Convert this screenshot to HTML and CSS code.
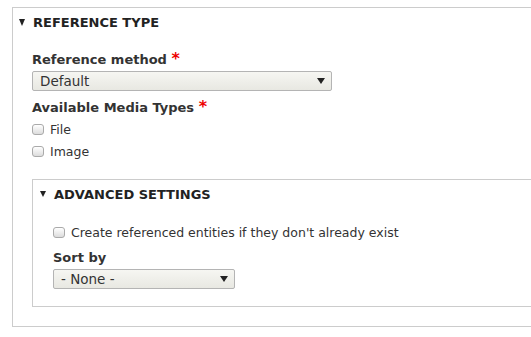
FILE: index.html
```html
<!DOCTYPE html>
<html lang="en">
<head>
    <meta charset="UTF-8">
    <title>Reference type</title>
    <link rel="stylesheet" href="styles.css">
</head>
<body>

<details class="panel outer" open>
    <summary class="panel-title">Reference type</summary>
    <div class="panel-body">
        <div class="form-item">
            <label class="form-label">Reference method <span class="req">*</span></label>
            <div class="select wide">
                <select>
                    <option>Default</option>
                </select>
                <span class="arrow"></span>
            </div>
        </div>

        <div class="form-item">
            <label class="form-label tight">Available Media Types <span class="req">*</span></label>
            <label class="check"><input type="checkbox"> File</label>
            <label class="check"><input type="checkbox"> Image</label>
        </div>

        <details class="panel inner" open>
            <summary class="panel-title small">Advanced settings</summary>
            <div class="panel-body">
                <label class="check"><input type="checkbox"> Create referenced entities if they don't already exist</label>
                <div class="form-item sort">
                    <label class="form-label">Sort by</label>
                    <div class="select narrow">
                        <select>
                            <option>- None -</option>
                        </select>
                        <span class="arrow"></span>
                    </div>
                </div>
            </div>
        </details>
    </div>
</details>

</body>
</html>
```

FILE: styles.css
```css
body {
    margin: 0;
    padding: 7px 0 0 12px;
    background-color: #fff;
    color: #333;
    font-family: "DejaVu Sans", sans-serif;
    font-size: 13px;
    overflow: hidden;
}

.panel {
    border: 1px solid #ccc;
    border-right: none;
    margin: 0;
}

.outer {
    width: 540px;
    height: 318px;
}

.inner {
    margin-top: 17px;
    width: 520px;
    height: 126px;
}

.panel-title {
    list-style: none;
    cursor: pointer;
    font-weight: bold;
    text-transform: uppercase;
    color: #222;
    display: flex;
    align-items: center;
    padding: 3px 0 0 6px;
    height: 22px;
}

.panel-title::-webkit-details-marker {
    display: none;
}

.panel-title::before {
    content: "";
    width: 0;
    height: 0;
    border-left: 3.5px solid transparent;
    border-right: 3.5px solid transparent;
    border-top: 7px solid #222;
    margin-right: 8px;
}

.panel-title.small::before {
    border-left-width: 3px;
    border-right-width: 3px;
    border-top-width: 6px;
    margin-left: 1px;
    margin-right: 8px;
}

.outer > .panel-body {
    padding: 19px 0 0 19px;
}

.inner > .panel-body {
    padding: 16px 0 0 20px;
}

.form-item {
    margin-bottom: 9px;
}

.form-label {
    display: block;
    font-weight: bold;
    color: #333;
    line-height: 16px;
    margin-bottom: 3px;
}

.form-label.tight {
    margin-bottom: 2px;
}

.req {
    color: #e00;
    font-size: 16px;
    line-height: 10px;
}

.select {
    position: relative;
    height: 20px;
}

.select.wide {
    width: 300px;
}

.select.narrow {
    width: 182px;
}

.select select {
    appearance: none;
    -webkit-appearance: none;
    width: 100%;
    height: 20px;
    margin: 0;
    padding: 0 0 0 7px;
    border: 1px solid #b4b4b4;
    border-radius: 2px;
    background: linear-gradient(#f6f6f2, #e8e8e2);
    color: #333;
    font-family: "DejaVu Sans", sans-serif;
    font-size: 13.5px;
    line-height: 18px;
}

.select .arrow {
    position: absolute;
    right: 7px;
    top: 7px;
    width: 0;
    height: 0;
    border-left: 4.5px solid transparent;
    border-right: 4.5px solid transparent;
    border-top: 6px solid #222;
}

.check {
    display: flex;
    align-items: center;
    height: 22px;
    color: #333;
    font-size: 12.5px;
}

.check input {
    appearance: none;
    -webkit-appearance: none;
    width: 12px;
    height: 11px;
    margin: 0 6px 0 0;
    border: 1px solid #aaa;
    border-radius: 3px;
    background: linear-gradient(#fff, #dcdcdc);
}

.inner .check {
    margin-bottom: 7px;
}
```
